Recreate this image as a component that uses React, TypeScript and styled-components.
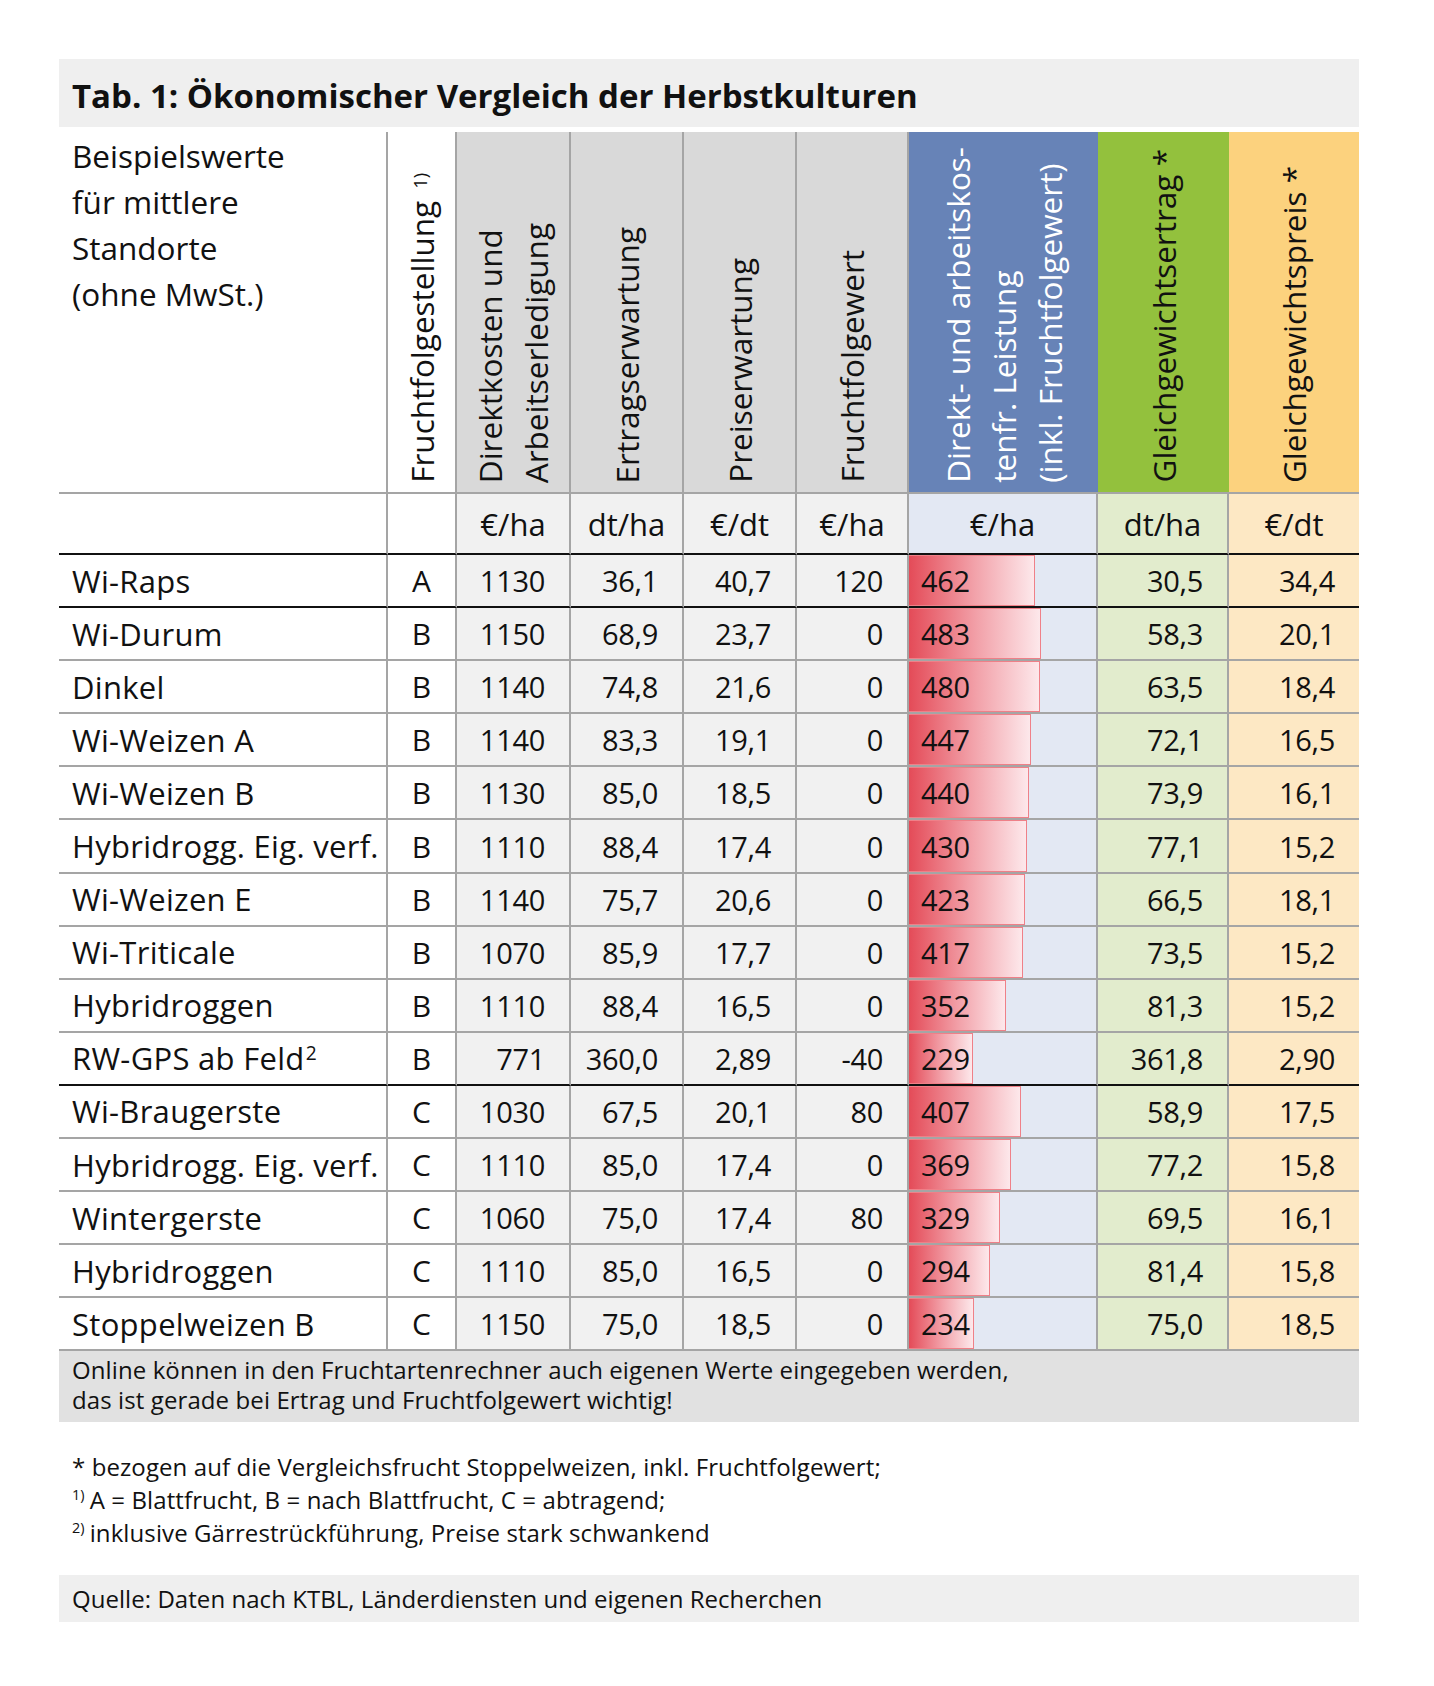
import React from "react";
import styled, { createGlobalStyle } from "styled-components";

const GlobalStyle = createGlobalStyle`
  html, body { margin: 0; padding: 0; background: #ffffff; }
  body {
    font-family: "Open Sans", "Noto Sans", sans-serif;
    color: #111111;
  }
`;

const GRAY_LINE = "#a5a5a5";
const BLACK_LINE = "#111111";

type Kind = "name" | "ff" | "gray" | "blue" | "green" | "orange";

const headBg: Record<Kind, string> = {
  name: "#ffffff",
  ff: "#ffffff",
  gray: "#d9d9d9",
  blue: "#6783b7",
  green: "#93c13d",
  orange: "#fcd27e",
};

const bodyBg: Record<Kind, string> = {
  name: "#ffffff",
  ff: "#ffffff",
  gray: "#f1f1f1",
  blue: "#e3e8f3",
  green: "#e2eccd",
  orange: "#fde8c4",
};

const Page = styled.div`
  width: 1300px;
  padding: 59px 0 60px 59px;
`;

const TitleBar = styled.div`
  height: 68px;
  background: #efefef;
  display: flex;
  align-items: center;
  padding: 4px 13px 0;
  box-sizing: border-box;
  margin-bottom: 5px;
  font-weight: 700;
  font-size: 33px;
  letter-spacing: 0;
  color: #111;
`;

const Table = styled.div`
  display: grid;
  grid-template-columns: 329px 69px 114px 113px 113px 112px 189px 131px 130px;
  grid-template-rows: 362px 61px repeat(15, 53.1px);
  font-size: 29px;
  letter-spacing: -0.3px;
`;

const HeadCell = styled.div<{ $kind: Kind; $line: boolean }>`
  box-sizing: border-box;
  background: ${(p) => headBg[p.$kind]};
  border-bottom: 2px solid ${GRAY_LINE};
  border-right: ${(p) => (p.$line ? `2px solid ${GRAY_LINE}` : "none")};
  display: flex;
  justify-content: center;
  align-items: flex-end;
  padding-bottom: 9px;
  font-size: 31.5px;
  letter-spacing: 0;
  color: ${(p) => (p.$kind === "blue" ? "#ffffff" : "#111111")};
`;

const CornerCell = styled.div`
  box-sizing: border-box;
  border-bottom: 2px solid ${GRAY_LINE};
  border-right: 2px solid ${GRAY_LINE};
  padding: 1px 13px 0;
  line-height: 46px;
  font-size: 31.5px;
  letter-spacing: 0;
`;

const VText = styled.span`
  writing-mode: vertical-rl;
  transform: rotate(180deg);
  line-height: 46px;
  white-space: nowrap;
`;

const VSup = styled.span`
  font-size: 58%;
  line-height: 0;
  vertical-align: 2px;
  margin-inline-start: 12px;
`;

const UnitCell = styled.div<{ $kind: Kind; $last: boolean }>`
  box-sizing: border-box;
  background: ${(p) => bodyBg[p.$kind]};
  border-bottom: 2px solid ${BLACK_LINE};
  border-right: ${(p) => (p.$last ? "none" : `2px solid ${GRAY_LINE}`)};
  display: flex;
  align-items: center;
  justify-content: center;
  font-size: 31px;
  letter-spacing: 0;
`;

const Cell = styled.div<{
  $kind: Kind;
  $last: boolean;
  $black: boolean;
  $align: "left" | "center" | "right";
}>`
  position: relative;
  box-sizing: border-box;
  background: ${(p) => bodyBg[p.$kind]};
  border-bottom: 2px solid ${(p) => (p.$black ? BLACK_LINE : GRAY_LINE)};
  border-right: ${(p) => (p.$last ? "none" : `2px solid ${GRAY_LINE}`)};
  display: flex;
  align-items: center;
  white-space: nowrap;
  justify-content: ${(p) =>
    p.$align === "left" ? "flex-start" : p.$align === "center" ? "center" : "flex-end"};
  padding: ${(p) =>
    p.$align === "left" ? "0 0 0 13px" : p.$align === "center" ? "0" : "0 24px 0 0"};
`;

const NameCell = styled(Cell)`
  font-size: 31px;
  letter-spacing: 0.3px;
`;

const NameText = styled.span`
  white-space: nowrap;
`;

const LetterCell = styled(Cell)`
  font-size: 30px;
  letter-spacing: 0;
`;

const BarCell = styled(Cell)`
  padding-left: 12px;
`;

const Bar = styled.div`
  position: absolute;
  left: 0;
  top: 0;
  bottom: 0;
  box-sizing: border-box;
  background: linear-gradient(to right, #e44b58 0%, #f2a1a9 52%, #fde8eb 100%);
  border: 1px solid #ef8088;
  border-left: none;
`;

const BarValue = styled.span`
  position: relative;
`;

const SmallSup = styled.span`
  font-size: 62%;
  line-height: 0;
  vertical-align: 10px;
  margin-left: 1px;
`;

const NoteBox = styled.div`
  box-sizing: border-box;
  height: 71px;
  background: #e1e1e1;
  padding: 4px 13px 0;
  font-size: 24px;
  line-height: 30px;
  letter-spacing: 0.1px;
`;

const Footnotes = styled.div`
  margin-top: 28px;
  padding-left: 13px;
  font-size: 24px;
  line-height: 33px;
  letter-spacing: 0.1px;
`;

const FootSup = styled.sup`
  font-size: 60%;
  line-height: 0;
  margin-right: 5px;
`;

const SourceBox = styled.div`
  margin-top: 26px;
  height: 47px;
  background: #efefef;
  display: flex;
  align-items: center;
  padding: 0 13px;
  font-size: 24px;
  letter-spacing: 0.05px;
`;

type Row = [string, string, string, string, string, string, number, string, string];

const rows: Row[] = [
  ["Wi-Raps", "A", "1130", "36,1", "40,7", "120", 462, "30,5", "34,4"],
  ["Wi-Durum", "B", "1150", "68,9", "23,7", "0", 483, "58,3", "20,1"],
  ["Dinkel", "B", "1140", "74,8", "21,6", "0", 480, "63,5", "18,4"],
  ["Wi-Weizen A", "B", "1140", "83,3", "19,1", "0", 447, "72,1", "16,5"],
  ["Wi-Weizen B", "B", "1130", "85,0", "18,5", "0", 440, "73,9", "16,1"],
  ["Hybridrogg. Eig. verf.", "B", "1110", "88,4", "17,4", "0", 430, "77,1", "15,2"],
  ["Wi-Weizen E", "B", "1140", "75,7", "20,6", "0", 423, "66,5", "18,1"],
  ["Wi-Triticale", "B", "1070", "85,9", "17,7", "0", 417, "73,5", "15,2"],
  ["Hybridroggen", "B", "1110", "88,4", "16,5", "0", 352, "81,3", "15,2"],
  ["RW-GPS ab Feld", "B", "771", "360,0", "2,89", "-40", 229, "361,8", "2,90"],
  ["Wi-Braugerste", "C", "1030", "67,5", "20,1", "80", 407, "58,9", "17,5"],
  ["Hybridrogg. Eig. verf.", "C", "1110", "85,0", "17,4", "0", 369, "77,2", "15,8"],
  ["Wintergerste", "C", "1060", "75,0", "17,4", "80", 329, "69,5", "16,1"],
  ["Hybridroggen", "C", "1110", "85,0", "16,5", "0", 294, "81,4", "15,8"],
  ["Stoppelweizen B", "C", "1150", "75,0", "18,5", "0", 234, "75,0", "18,5"],
];

const kinds: Kind[] = ["name", "ff", "gray", "gray", "gray", "gray", "blue", "green", "orange"];
const blackAfter = new Set([0, 9]);
const units = ["", "", "€/ha", "dt/ha", "€/dt", "€/ha", "€/ha", "dt/ha", "€/dt"];

export default function App() {
  return (
    <>
      <GlobalStyle />
      <Page>
        <TitleBar>Tab. 1: Ökonomischer Vergleich der Herbstkulturen</TitleBar>
        <Table>
          <CornerCell>
            Beispielswerte
            <br />
            für mittlere
            <br />
            Standorte
            <br />
            (ohne MwSt.)
          </CornerCell>
          <HeadCell $kind="ff" $line>
            <VText>
              Fruchtfolgestellung<VSup>1)</VSup>
            </VText>
          </HeadCell>
          <HeadCell $kind="gray" $line>
            <VText>
              Direktkosten und
              <br />
              Arbeitserledigung
            </VText>
          </HeadCell>
          <HeadCell $kind="gray" $line>
            <VText>Ertragserwartung</VText>
          </HeadCell>
          <HeadCell $kind="gray" $line>
            <VText>Preiserwartung</VText>
          </HeadCell>
          <HeadCell $kind="gray" $line>
            <VText>Fruchtfolgewert</VText>
          </HeadCell>
          <HeadCell $kind="blue" $line={false}>
            <VText>
              Direkt- und arbeitskos-
              <br />
              tenfr. Leistung
              <br />
              (inkl. Fruchtfolgewert)
            </VText>
          </HeadCell>
          <HeadCell $kind="green" $line={false}>
            <VText>Gleichgewichtsertrag *</VText>
          </HeadCell>
          <HeadCell $kind="orange" $line={false}>
            <VText>Gleichgewichtspreis *</VText>
          </HeadCell>

          {units.map((u, i) => (
            <UnitCell key={`u${i}`} $kind={kinds[i]} $last={i === 8}>
              {u}
            </UnitCell>
          ))}

          {rows.map((r, ri) => {
            const black = blackAfter.has(ri);
            return (
              <React.Fragment key={`r${ri}`}>
                <NameCell $kind="name" $last={false} $black={black} $align="left">
                  <NameText>
                    {r[0]}
                    {ri === 9 && <SmallSup>2</SmallSup>}
                  </NameText>
                </NameCell>
                <LetterCell $kind="ff" $last={false} $black={black} $align="center">
                  {r[1]}
                </LetterCell>
                {[2, 3, 4, 5].map((ci) => (
                  <Cell key={ci} $kind="gray" $last={false} $black={black} $align="right">
                    {r[ci]}
                  </Cell>
                ))}
                <BarCell $kind="blue" $last={false} $black={black} $align="left">
                  <Bar style={{ width: `${Math.round(r[6] * 0.267 + 3)}px` }} />
                  <BarValue>{r[6]}</BarValue>
                </BarCell>
                <Cell $kind="green" $last={false} $black={black} $align="right">
                  {r[7]}
                </Cell>
                <Cell $kind="orange" $last $black={black} $align="right">
                  {r[8]}
                </Cell>
              </React.Fragment>
            );
          })}
        </Table>
        <NoteBox>
          Online können in den Fruchtartenrechner auch eigenen Werte eingegeben werden,
          <br />
          das ist gerade bei Ertrag und Fruchtfolgewert wichtig!
        </NoteBox>
        <Footnotes>
          <div>* bezogen auf die Vergleichsfrucht Stoppelweizen, inkl. Fruchtfolgewert;</div>
          <div>
            <FootSup>1)</FootSup>A = Blattfrucht, B = nach Blattfrucht, C = abtragend;
          </div>
          <div>
            <FootSup>2)</FootSup>inklusive Gärrestrückführung, Preise stark schwankend
          </div>
        </Footnotes>
        <SourceBox>Quelle: Daten nach KTBL, Länderdiensten und eigenen Recherchen</SourceBox>
      </Page>
    </>
  );
}
